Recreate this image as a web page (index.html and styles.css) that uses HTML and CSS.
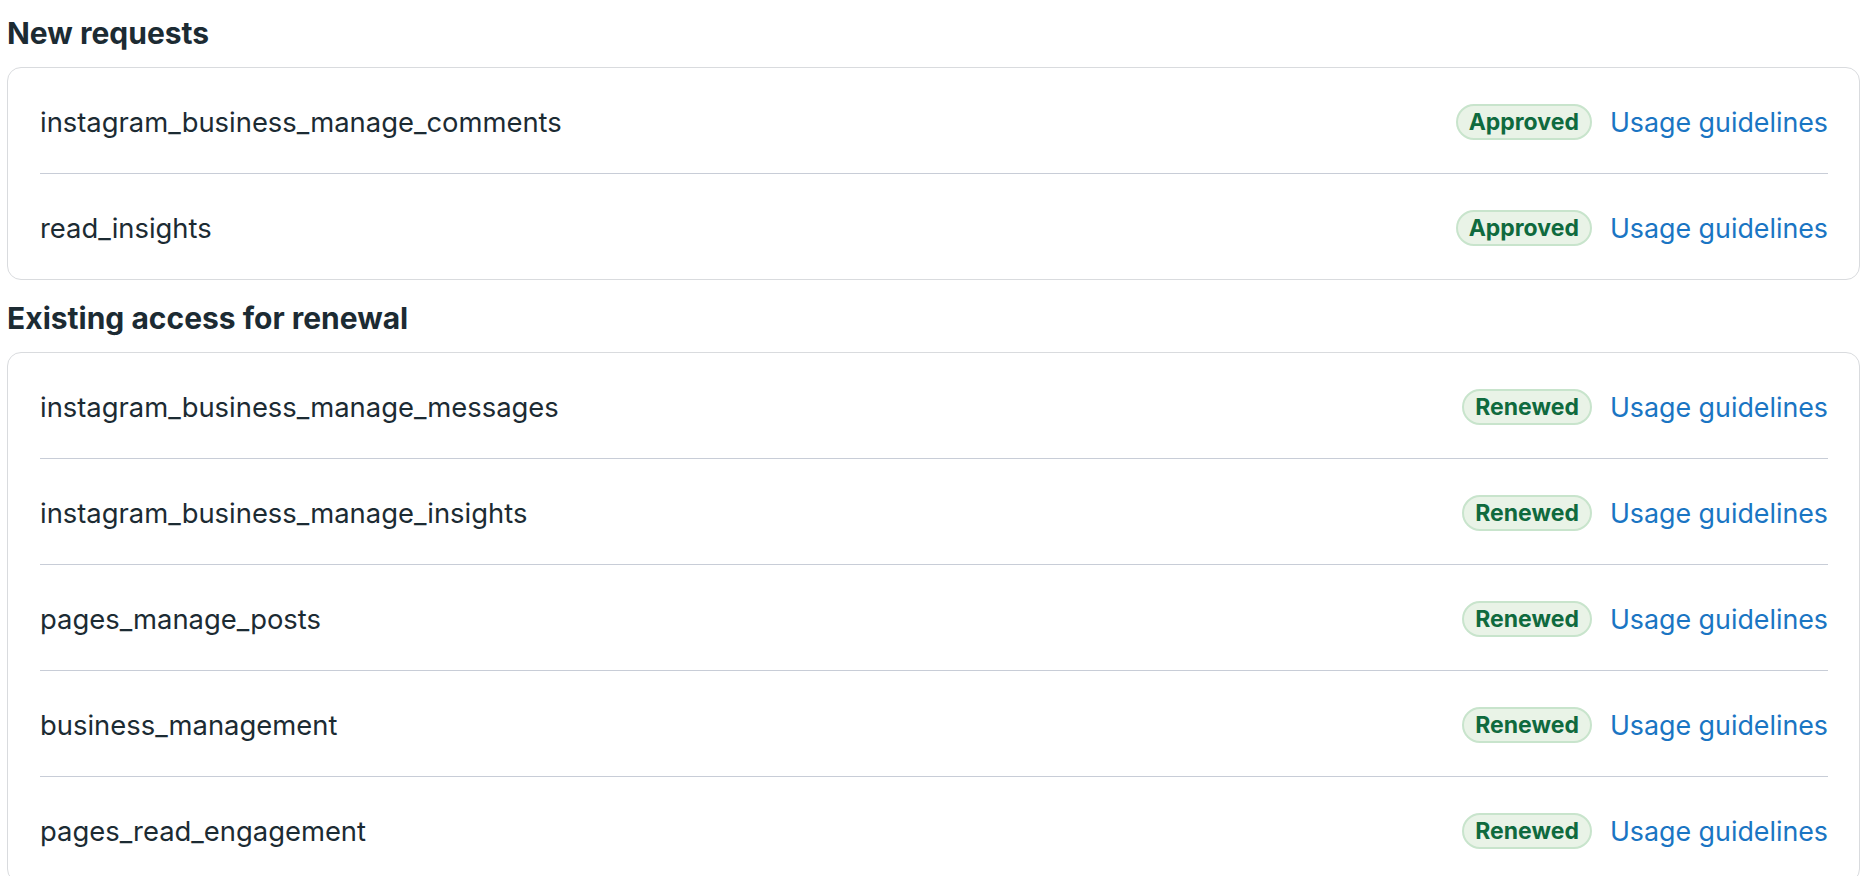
FILE: index.html
```html
<!DOCTYPE html>
<html lang="en">
  <head>
    <meta charset="UTF-8" />
    <meta name="viewport" content="width=device-width, initial-scale=1.0" />
    <title>Permissions review</title>
    <link rel="stylesheet" href="styles.css">
  </head>

  <body>
    <div class="page">
      <!-- New requests -->
      <h2 class="section-title">New requests</h2>
      <div class="card">
        <div class="perm-row">
          <span class="perm-name">instagram_business_manage_comments</span>
          <div class="perm-actions">
            <span class="badge">Approved</span>
            <a class="link" href="#">Usage guidelines</a>
          </div>
        </div>
        <div class="perm-row">
          <span class="perm-name">read_insights</span>
          <div class="perm-actions">
            <span class="badge">Approved</span>
            <a class="link" href="#">Usage guidelines</a>
          </div>
        </div>
      </div>

      <!-- Existing access -->
      <h2 class="section-title">Existing access for renewal</h2>
      <div class="card">
        <div class="perm-row">
          <span class="perm-name">instagram_business_manage_messages</span>
          <div class="perm-actions">
            <span class="badge">Renewed</span>
            <a class="link" href="#">Usage guidelines</a>
          </div>
        </div>
        <div class="perm-row">
          <span class="perm-name">instagram_business_manage_insights</span>
          <div class="perm-actions">
            <span class="badge">Renewed</span>
            <a class="link" href="#">Usage guidelines</a>
          </div>
        </div>
        <div class="perm-row">
          <span class="perm-name">pages_manage_posts</span>
          <div class="perm-actions">
            <span class="badge">Renewed</span>
            <a class="link" href="#">Usage guidelines</a>
          </div>
        </div>
        <div class="perm-row">
          <span class="perm-name">business_management</span>
          <div class="perm-actions">
            <span class="badge">Renewed</span>
            <a class="link" href="#">Usage guidelines</a>
          </div>
        </div>
        <div class="perm-row">
          <span class="perm-name">pages_read_engagement</span>
          <div class="perm-actions">
            <span class="badge">Renewed</span>
            <a class="link" href="#">Usage guidelines</a>
          </div>
        </div>
      </div>
    </div>
  </body>
</html>
```

FILE: styles.css
```css
body,
html {
  margin: 0;
  padding: 0;
  background: #ffffff;
  font-family: Inter, "Noto Sans", sans-serif;
  color: #1c2b33;
}

.page {
  padding: 15px 5px 0 7px;
}

/* Section headings */
.section-title {
  margin: 0 0 16px;
  font-size: 30px;
  line-height: 36px;
  font-weight: 700;
  color: #1c2b33;
}

/* Card with permission rows */
.card {
  border: 1px solid #d9dbde;
  border-radius: 14px;
  margin-bottom: 20px;
}

.perm-row {
  height: 105px;
  margin: 0 31px 0 32px;
  display: flex;
  align-items: center;
  justify-content: space-between;
}

.perm-row + .perm-row {
  border-top: 1px solid #c8cdd7;
}

.perm-name {
  font-size: 27.4px;
  padding-top: 3px;
}

.perm-actions {
  display: flex;
  align-items: center;
  gap: 18px;
  padding-top: 2px;
}

/* Status pill */
.badge {
  height: 32px;
  line-height: 32px;
  padding: 0 11px;
  border: 2px solid #c8e4cc;
  border-radius: 19px;
  background-color: #e9f3e7;
  color: #0f6a3e;
  font-size: 23px;
  font-weight: 700;
}

.link {
  font-size: 26.8px;
  color: #1a75c3;
  text-decoration: none;
}
```
